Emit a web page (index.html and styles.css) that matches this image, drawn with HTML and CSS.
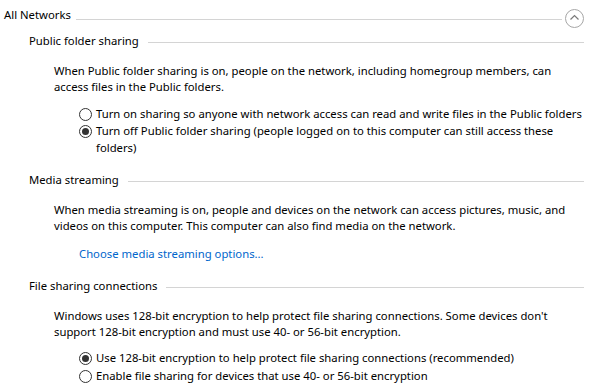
FILE: index.html
```html
<!DOCTYPE html>
<html lang="en">
<head>
    <meta charset="UTF-8">
    <title>Advanced sharing settings</title>
    <link rel="stylesheet" href="styles.css">
</head>
<body>
    <div class="settings">

        <!-- Group header -->
        <div class="group-head">
            <span class="group-title">All Networks</span>
            <span class="rule"></span>
            <button class="collapse" title="Collapse">
                <svg width="19" height="19" viewBox="0 0 19 19">
                    <circle cx="9.5" cy="9.5" r="9" fill="none" stroke="#a6a6a6" stroke-width="1"/>
                    <path d="M5.5 10.5 L9.5 6.5 L13.5 10.5" fill="none" stroke="#7a7a7a" stroke-width="1.2"/>
                </svg>
            </button>
        </div>

        <!-- Public folder sharing -->
        <div class="section first">
            <div class="section-head">
                <span>Public folder sharing</span>
                <span class="rule"></span>
            </div>
            <p class="desc">When Public folder sharing is on, people on the network, including homegroup members, can access files in the Public folders.</p>
            <div class="options">
                <label class="option">
                    <input type="radio" name="public">
                    <span>Turn on sharing so anyone with network access can read and write files in the Public folders</span>
                </label>
                <label class="option">
                    <input type="radio" name="public" checked>
                    <span>Turn off Public folder sharing (people logged on to this computer can still access these folders)</span>
                </label>
            </div>
        </div>

        <!-- Media streaming -->
        <div class="section">
            <div class="section-head">
                <span>Media streaming</span>
                <span class="rule"></span>
            </div>
            <p class="desc">When media streaming is on, people and devices on the network can access pictures, music, and videos on this computer. This computer can also find media on the network.</p>
            <a href="#" class="link">Choose media streaming options...</a>
        </div>

        <!-- File sharing connections -->
        <div class="section">
            <div class="section-head">
                <span>File sharing connections</span>
                <span class="rule"></span>
            </div>
            <p class="desc">Windows uses 128-bit encryption to help protect file sharing connections. Some devices don't support 128-bit encryption and must use 40- or 56-bit encryption.</p>
            <div class="options spaced">
                <label class="option">
                    <input type="radio" name="encryption" checked>
                    <span>Use 128-bit encryption to help protect file sharing connections (recommended)</span>
                </label>
                <label class="option">
                    <input type="radio" name="encryption">
                    <span>Enable file sharing for devices that use 40- or 56-bit encryption</span>
                </label>
            </div>
        </div>

    </div>
</body>
</html>
```

FILE: styles.css
```css
body {
    margin: 0;
    padding: 0;
    background: #fff;
    font-family: 'Segoe UI', 'Noto Sans', sans-serif;
    font-size: 11.3px;
    color: #000;
}

.settings {
    padding: 7px 6px 0 4px;
}

/* Group header */
.group-head {
    display: flex;
    align-items: flex-start;
    line-height: 16px;
}

.group-title {
    margin-right: 5px;
}

.rule {
    flex: 1;
    height: 1px;
    background: #d4d4d4;
}

.group-head .rule {
    margin-top: 12px;
    margin-right: 3px;
}

.collapse {
    width: 19px;
    height: 19px;
    margin-top: 2px;
    padding: 0;
    border: none;
    background: none;
    cursor: pointer;
}

.collapse svg {
    display: block;
}

/* Sections */
.section {
    margin-top: 16px;
    padding-left: 25px;
}

.section.first {
    margin-top: 5px;
}

.section-head {
    display: flex;
    align-items: flex-start;
    line-height: 16px;
}

.section-head .rule {
    margin-top: 9px;
    margin-left: 9px;
}

.desc {
    margin: 14px 0 0 25px;
    line-height: 16px;
    max-width: 530px;
}

.options {
    display: flex;
    flex-direction: column;
    margin: 10px 0 0 50px;
}

.options.spaced {
    margin-top: 9px;
    gap: 1px;
}

.option {
    display: flex;
    align-items: flex-start;
    line-height: 17px;
}

.option input {
    appearance: none;
    flex: none;
    width: 13px;
    height: 13px;
    margin: 3px 4px 0 0;
    border: 1px solid #333;
    border-radius: 50%;
    background: #fff;
    position: relative;
}

.option input:checked::after {
    content: '';
    position: absolute;
    top: 2px;
    left: 2px;
    width: 7px;
    height: 7px;
    border-radius: 50%;
    background: #333;
}

.link {
    display: block;
    margin: 12px 0 0 50px;
    line-height: 16px;
    color: #0066cc;
    text-decoration: none;
}

.link:hover {
    text-decoration: underline;
}
```
